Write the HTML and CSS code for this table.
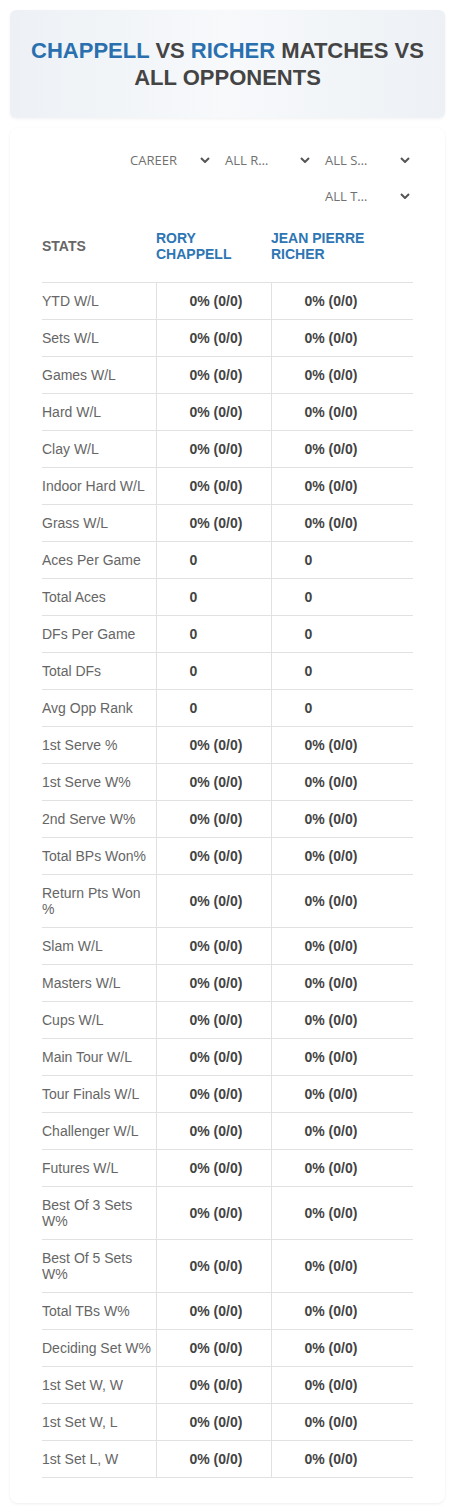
FILE: index.html
```html
<!DOCTYPE html>
<html lang="en">
<head>
    <meta charset="UTF-8">
    <title>Chappell vs Richer - Matches vs All Opponents</title>
    <link rel="stylesheet" href="styles.css">
</head>
<body>
    <div class="page">
        <div class="title-card">
            <h1 class="title"><span class="player">Chappell</span> vs <span class="player">Richer</span> matches vs all opponents</h1>
        </div>

        <div class="stats-card">
            <div class="filters">
                <div class="filter period"><span class="filter-label">CAREER</span><svg class="chevron" viewBox="0 0 10 6"><polyline points="1,1 5,5 9,1"/></svg></div>
                <div class="filter"><span class="filter-label">ALL R…</span><svg class="chevron" viewBox="0 0 10 6"><polyline points="1,1 5,5 9,1"/></svg></div>
                <div class="filter"><span class="filter-label">ALL S…</span><svg class="chevron" viewBox="0 0 10 6"><polyline points="1,1 5,5 9,1"/></svg></div>
                <div class="filter"><span class="filter-label">ALL T…</span><svg class="chevron" viewBox="0 0 10 6"><polyline points="1,1 5,5 9,1"/></svg></div>
            </div>

            <table class="stats-table">
                <thead>
                    <tr>
                        <th class="stat-name">STATS</th>
                        <th class="player-name">RORY CHAPPELL</th>
                        <th class="player-name">JEAN PIERRE RICHER</th>
                    </tr>
                </thead>
                <tbody>
                    <tr><td>YTD W/L</td><td>0% (0/0)</td><td>0% (0/0)</td></tr>
                    <tr><td>Sets W/L</td><td>0% (0/0)</td><td>0% (0/0)</td></tr>
                    <tr><td>Games W/L</td><td>0% (0/0)</td><td>0% (0/0)</td></tr>
                    <tr><td>Hard W/L</td><td>0% (0/0)</td><td>0% (0/0)</td></tr>
                    <tr><td>Clay W/L</td><td>0% (0/0)</td><td>0% (0/0)</td></tr>
                    <tr><td>Indoor Hard W/L</td><td>0% (0/0)</td><td>0% (0/0)</td></tr>
                    <tr><td>Grass W/L</td><td>0% (0/0)</td><td>0% (0/0)</td></tr>
                    <tr><td>Aces Per Game</td><td>0</td><td>0</td></tr>
                    <tr><td>Total Aces</td><td>0</td><td>0</td></tr>
                    <tr><td>DFs Per Game</td><td>0</td><td>0</td></tr>
                    <tr><td>Total DFs</td><td>0</td><td>0</td></tr>
                    <tr><td>Avg Opp Rank</td><td>0</td><td>0</td></tr>
                    <tr><td>1st Serve %</td><td>0% (0/0)</td><td>0% (0/0)</td></tr>
                    <tr><td>1st Serve W%</td><td>0% (0/0)</td><td>0% (0/0)</td></tr>
                    <tr><td>2nd Serve W%</td><td>0% (0/0)</td><td>0% (0/0)</td></tr>
                    <tr><td>Total BPs Won%</td><td>0% (0/0)</td><td>0% (0/0)</td></tr>
                    <tr><td>Return Pts Won %</td><td>0% (0/0)</td><td>0% (0/0)</td></tr>
                    <tr><td>Slam W/L</td><td>0% (0/0)</td><td>0% (0/0)</td></tr>
                    <tr><td>Masters W/L</td><td>0% (0/0)</td><td>0% (0/0)</td></tr>
                    <tr><td>Cups W/L</td><td>0% (0/0)</td><td>0% (0/0)</td></tr>
                    <tr><td>Main Tour W/L</td><td>0% (0/0)</td><td>0% (0/0)</td></tr>
                    <tr><td>Tour Finals W/L</td><td>0% (0/0)</td><td>0% (0/0)</td></tr>
                    <tr><td>Challenger W/L</td><td>0% (0/0)</td><td>0% (0/0)</td></tr>
                    <tr><td>Futures W/L</td><td>0% (0/0)</td><td>0% (0/0)</td></tr>
                    <tr><td>Best Of 3 Sets W%</td><td>0% (0/0)</td><td>0% (0/0)</td></tr>
                    <tr><td>Best Of 5 Sets W%</td><td>0% (0/0)</td><td>0% (0/0)</td></tr>
                    <tr><td>Total TBs W%</td><td>0% (0/0)</td><td>0% (0/0)</td></tr>
                    <tr><td>Deciding Set W%</td><td>0% (0/0)</td><td>0% (0/0)</td></tr>
                    <tr><td>1st Set W, W</td><td>0% (0/0)</td><td>0% (0/0)</td></tr>
                    <tr><td>1st Set W, L</td><td>0% (0/0)</td><td>0% (0/0)</td></tr>
                    <tr><td>1st Set L, W</td><td>0% (0/0)</td><td>0% (0/0)</td></tr>
                </tbody>
            </table>
        </div>
    </div>
</body>
</html>
```

FILE: styles.css
```css
body, html {
    margin: 0;
    padding: 0;
    background: #FFFFFF;
    font-family: 'Liberation Sans', Arial, sans-serif;
}

.page {
    padding: 10px 10px;
}

.title-card {
    padding: 27px 12px 27px;
    border-radius: 6px;
    background: linear-gradient(90deg, #EDF1F5 0%, #F7F9FB 50%, #EDF1F5 100%);
    box-shadow: 0 1px 3px rgba(0, 0, 0, 0.06);
}

.title {
    margin: 0;
    font-size: 22px;
    line-height: 27px;
    font-weight: bold;
    text-align: center;
    text-transform: uppercase;
    color: #444444;
}

.title .player {
    color: #2B70AE;
}

.stats-card {
    margin-top: 10px;
    padding: 17px 32px 25px;
    border-radius: 8px;
    background: #FFFFFF;
    box-shadow: 0 1px 3px rgba(0, 0, 0, 0.07);
}

.filters {
    display: flex;
    flex-wrap: wrap;
    justify-content: flex-end;
    row-gap: 6px;
    margin-right: -2px;
}

.filter {
    display: flex;
    align-items: center;
    justify-content: space-between;
    width: 100px;
    height: 30px;
    padding: 0 5px 0 10px;
    box-sizing: border-box;
}

.filter.period {
    width: 95px;
}

.filter-label {
    font-family: 'Open Sans', sans-serif;
    font-size: 13px;
    color: #707070;
}

.chevron {
    width: 10px;
    height: 6px;
    fill: none;
    stroke: #555555;
    stroke-width: 2;
}

.stats-table {
    width: 100%;
    margin-top: 15px;
    border-collapse: collapse;
    table-layout: fixed;
    font-size: 14px;
    line-height: 16px;
}

.stats-table th {
    box-sizing: border-box;
    padding: 4px 8px 20px 0;
    text-align: left;
    font-weight: bold;
    border-bottom: 1px solid #E1E1E1;
}

.stats-table th.stat-name {
    width: 114px;
    vertical-align: middle;
    color: #666666;
}

.stats-table th.player-name {
    color: #2E75B3;
}

.stats-table th.player-name:nth-child(2) {
    width: 115px;
}

.stats-table td {
    padding: 10px 0 10px 33px;
    font-weight: bold;
    color: #444444;
    border-bottom: 1px solid #E1E1E1;
    border-left: 1px solid #E1E1E1;
}

.stats-table td:first-child {
    padding-left: 0;
    padding-right: 4px;
    font-weight: normal;
    color: #666666;
    border-left: none;
}
```
